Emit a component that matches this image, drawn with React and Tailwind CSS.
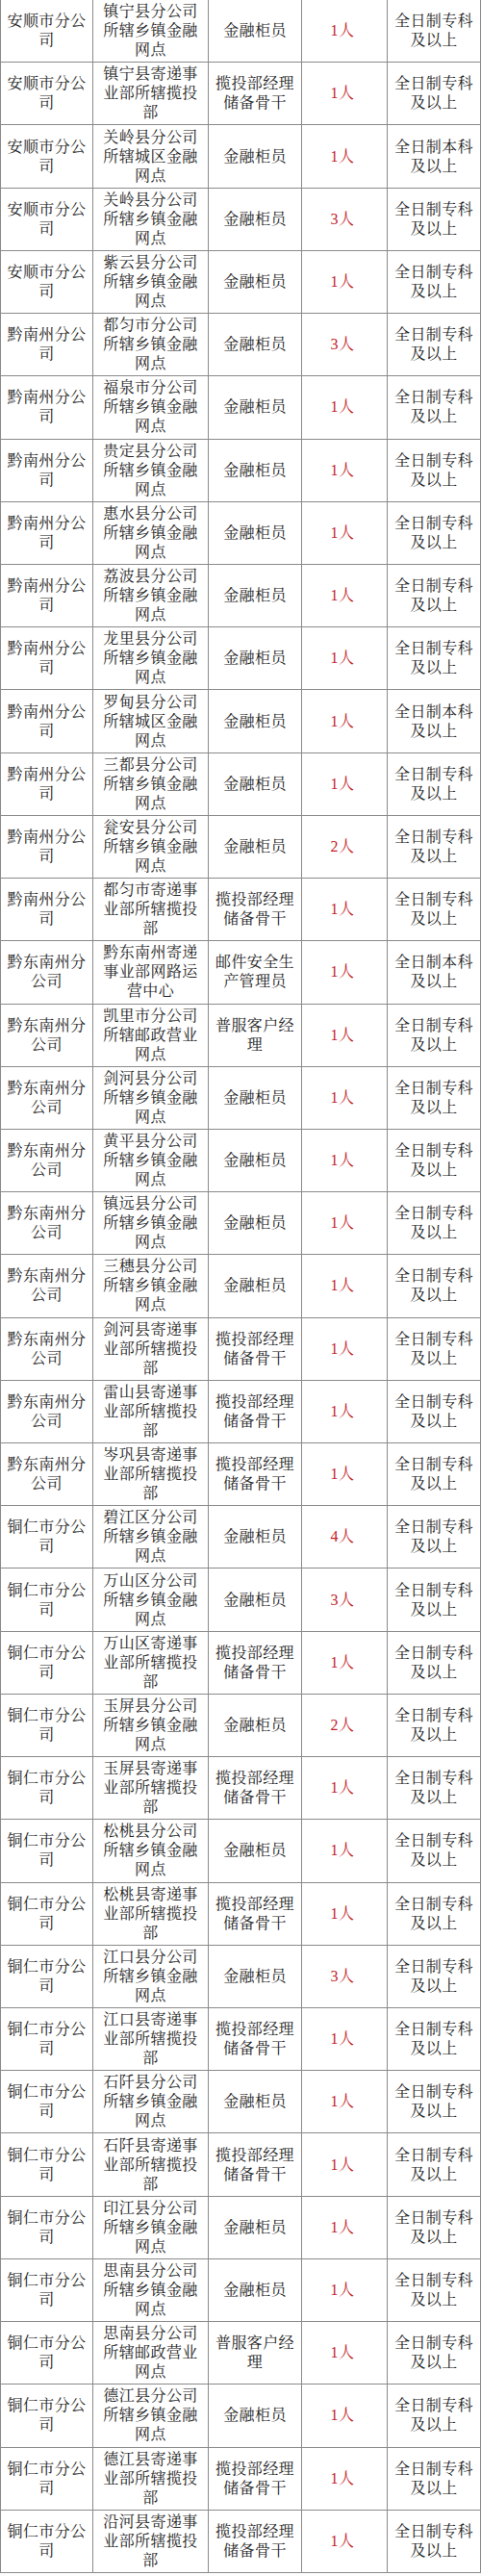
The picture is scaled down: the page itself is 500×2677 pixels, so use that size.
import React from "react";

const ZK = "全日制专科及以上";
const BK = "全日制本科及以上";
const GY = "金融柜员";
const LT = "揽投部经理储备骨干";

const rows = [
  ["安顺市分公司", "镇宁县分公司所辖乡镇金融网点", GY, 1, ZK],
  ["安顺市分公司", "镇宁县寄递事业部所辖揽投部", LT, 1, ZK],
  ["安顺市分公司", "关岭县分公司所辖城区金融网点", GY, 1, BK],
  ["安顺市分公司", "关岭县分公司所辖乡镇金融网点", GY, 3, ZK],
  ["安顺市分公司", "紫云县分公司所辖乡镇金融网点", GY, 1, ZK],
  ["黔南州分公司", "都匀市分公司所辖乡镇金融网点", GY, 3, ZK],
  ["黔南州分公司", "福泉市分公司所辖乡镇金融网点", GY, 1, ZK],
  ["黔南州分公司", "贵定县分公司所辖乡镇金融网点", GY, 1, ZK],
  ["黔南州分公司", "惠水县分公司所辖乡镇金融网点", GY, 1, ZK],
  ["黔南州分公司", "荔波县分公司所辖乡镇金融网点", GY, 1, ZK],
  ["黔南州分公司", "龙里县分公司所辖乡镇金融网点", GY, 1, ZK],
  ["黔南州分公司", "罗甸县分公司所辖城区金融网点", GY, 1, BK],
  ["黔南州分公司", "三都县分公司所辖乡镇金融网点", GY, 1, ZK],
  ["黔南州分公司", "瓮安县分公司所辖乡镇金融网点", GY, 2, ZK],
  ["黔南州分公司", "都匀市寄递事业部所辖揽投部", LT, 1, ZK],
  ["黔东南州分公司", "黔东南州寄递事业部网路运营中心", "邮件安全生产管理员", 1, BK],
  ["黔东南州分公司", "凯里市分公司所辖邮政营业网点", "普服客户经理", 1, ZK],
  ["黔东南州分公司", "剑河县分公司所辖乡镇金融网点", GY, 1, ZK],
  ["黔东南州分公司", "黄平县分公司所辖乡镇金融网点", GY, 1, ZK],
  ["黔东南州分公司", "镇远县分公司所辖乡镇金融网点", GY, 1, ZK],
  ["黔东南州分公司", "三穗县分公司所辖乡镇金融网点", GY, 1, ZK],
  ["黔东南州分公司", "剑河县寄递事业部所辖揽投部", LT, 1, ZK],
  ["黔东南州分公司", "雷山县寄递事业部所辖揽投部", LT, 1, ZK],
  ["黔东南州分公司", "岑巩县寄递事业部所辖揽投部", LT, 1, ZK],
  ["铜仁市分公司", "碧江区分公司所辖乡镇金融网点", GY, 4, ZK],
  ["铜仁市分公司", "万山区分公司所辖乡镇金融网点", GY, 3, ZK],
  ["铜仁市分公司", "万山区寄递事业部所辖揽投部", LT, 1, ZK],
  ["铜仁市分公司", "玉屏县分公司所辖乡镇金融网点", GY, 2, ZK],
  ["铜仁市分公司", "玉屏县寄递事业部所辖揽投部", LT, 1, ZK],
  ["铜仁市分公司", "松桃县分公司所辖乡镇金融网点", GY, 1, ZK],
  ["铜仁市分公司", "松桃县寄递事业部所辖揽投部", LT, 1, ZK],
  ["铜仁市分公司", "江口县分公司所辖乡镇金融网点", GY, 3, ZK],
  ["铜仁市分公司", "江口县寄递事业部所辖揽投部", LT, 1, ZK],
  ["铜仁市分公司", "石阡县分公司所辖乡镇金融网点", GY, 1, ZK],
  ["铜仁市分公司", "石阡县寄递事业部所辖揽投部", LT, 1, ZK],
  ["铜仁市分公司", "印江县分公司所辖乡镇金融网点", GY, 1, ZK],
  ["铜仁市分公司", "思南县分公司所辖乡镇金融网点", GY, 1, ZK],
  ["铜仁市分公司", "思南县分公司所辖邮政营业网点", "普服客户经理", 1, ZK],
  ["铜仁市分公司", "德江县分公司所辖乡镇金融网点", GY, 1, ZK],
  ["铜仁市分公司", "德江县寄递事业部所辖揽投部", LT, 1, ZK],
  ["铜仁市分公司", "沿河县寄递事业部所辖揽投部", LT, 1, ZK],
];

const cell =
  "flex items-center justify-center text-center border-r border-[#8a8a8a] px-1";

const App = () => {
  return (
    <div
      className="w-[500px] bg-white text-[#222] text-[16px] leading-[20px] tracking-[0.4px]"
      style={{ fontFamily: '"Liberation Serif", "Noto Serif CJK SC", "Noto Sans CJK SC", serif' }}
    >
      <div className="border-l border-[#8a8a8a]">
        {rows.map((r, i) => (
          <div
            key={i}
            className="grid grid-cols-[96px_120px_97px_89px_97px] h-[65.22px] border-b border-[#8a8a8a]"
          >
            <div className={cell}>{r[0]}</div>
            <div className={`${cell} px-[6px]`}>{r[1]}</div>
            <div className={cell}>{r[2]}</div>
            <div className={`${cell} text-[#c4202a] pr-2`}>{r[3]}人</div>
            <div className={cell}>{r[4]}</div>
          </div>
        ))}
      </div>
    </div>
  );
};

export default App;
